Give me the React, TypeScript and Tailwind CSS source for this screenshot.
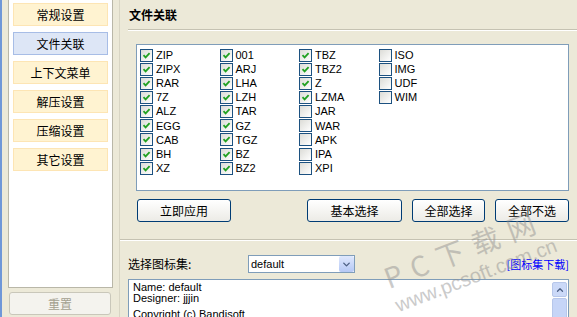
import { ChevronDown, ChevronUp } from 'lucide-react';

const cn = '"Noto Sans CJK SC", sans-serif';

const columns: { label: string; checked: boolean }[][] = [
  [
    { label: 'ZIP', checked: true },
    { label: 'ZIPX', checked: true },
    { label: 'RAR', checked: true },
    { label: '7Z', checked: true },
    { label: 'ALZ', checked: true },
    { label: 'EGG', checked: true },
    { label: 'CAB', checked: true },
    { label: 'BH', checked: true },
    { label: 'XZ', checked: true },
  ],
  [
    { label: '001', checked: true },
    { label: 'ARJ', checked: true },
    { label: 'LHA', checked: true },
    { label: 'LZH', checked: true },
    { label: 'TAR', checked: true },
    { label: 'GZ', checked: true },
    { label: 'TGZ', checked: true },
    { label: 'BZ', checked: true },
    { label: 'BZ2', checked: true },
  ],
  [
    { label: 'TBZ', checked: true },
    { label: 'TBZ2', checked: true },
    { label: 'Z', checked: true },
    { label: 'LZMA', checked: true },
    { label: 'JAR', checked: false },
    { label: 'WAR', checked: false },
    { label: 'APK', checked: false },
    { label: 'IPA', checked: false },
    { label: 'XPI', checked: false },
  ],
  [
    { label: 'ISO', checked: false },
    { label: 'IMG', checked: false },
    { label: 'UDF', checked: false },
    { label: 'WIM', checked: false },
  ],
];

const menu = ['常规设置', '文件关联', '上下文菜单', '解压设置', '压缩设置', '其它设置'];

function CheckBox({ checked }: { checked: boolean }) {
  return (
    <span className="flex h-[13px] w-[13px] shrink-0 items-center justify-center border border-[#1c5180] bg-gradient-to-br from-[#dcdcd7] to-white">
      {checked && (
        <svg width="9" height="9" viewBox="0 0 9 9">
          <path d="M1.5 4.2 L3.6 6.4 L7.6 2.2" fill="none" stroke="#21a121" strokeWidth="1.8" />
        </svg>
      )}
    </span>
  );
}

function XpButton({ children, w }: { children: string; w: string }) {
  return (
    <button
      className={`${w} h-[23px] shrink-0 rounded-[3px] border border-[#003c74] bg-gradient-to-b from-white to-[#ecebe6] text-[12px] text-black`}
      style={{ fontFamily: cn }}
    >
      {children}
    </button>
  );
}

export default function App() {
  return (
    <div
      className="relative flex h-[317px] w-[577px] overflow-hidden bg-[#ece9d8]"
      style={{ fontFamily: '"Liberation Sans", sans-serif' }}
    >
      {/* left nav */}
      <div className="flex w-[120px] shrink-0 flex-col border-l-2 border-r border-l-[#6f97d8] border-r-[#d8d5c4] pl-[6px]">
        <div className="-mt-px flex h-[289px] w-[105px] shrink-0 flex-col gap-[6px] border border-[#b9b7a8] bg-white pl-[4px] pt-[3px]">
          {menu.map((m, i) => (
            <div
              key={m}
              className={`flex h-[23px] w-[95px] shrink-0 items-center justify-center border text-[12px] text-black ${
                i === 1 ? 'border-[#a7bde6] bg-[#dde6f6]' : 'border-[#fde5b4] bg-[#fff3d1]'
              }`}
              style={{ fontFamily: cn }}
            >
              {m}
            </div>
          ))}
        </div>
        <div
          className="ml-[1px] mt-[4px] flex h-[23px] w-[102px] shrink-0 items-center justify-center rounded-[3px] border border-[#c9c7ba] bg-[#f4f3ee] text-[12px] text-[#a3a08f]"
          style={{ fontFamily: cn }}
        >
          重置
        </div>
      </div>

      {/* right pane */}
      <div className="flex flex-1 flex-col">
        <div className="flex h-[29px] shrink-0 items-center pl-[9px] text-[12px] font-bold text-black" style={{ fontFamily: cn }}>
          文件关联
        </div>
        <div className="ml-[8px] shrink-0 border-t border-b border-t-[#c5c2b2] border-b-white" />

        <div className="ml-[16px] mt-[13px] flex h-[147px] w-[433px] shrink-0 border border-[#7f9db9] bg-white pl-[3px] pt-[3px]">
          {columns.map((col, ci) => (
            <div key={ci} className="flex w-[79.5px] flex-col">
              {col.map((it) => (
                <div key={it.label} className="flex h-[14.15px] shrink-0 items-center gap-[3px] text-[11px] text-black">
                  <CheckBox checked={it.checked} />
                  <span>{it.label}</span>
                </div>
              ))}
            </div>
          ))}
        </div>

        <div className="ml-[17px] mt-[8px] flex w-[432px] shrink-0">
          <XpButton w="w-[94px]">立即应用</XpButton>
          <div className="ml-auto flex gap-[10px]">
            <XpButton w="w-[95px]">基本选择</XpButton>
            <XpButton w="w-[73px]">全部选择</XpButton>
            <XpButton w="w-[74px]">全部不选</XpButton>
          </div>
        </div>

        <div className="mt-[17px] shrink-0 border-t border-b border-t-[#c5c2b2] border-b-white" />

        <div className="ml-[8px] mt-[14px] flex h-[18px] w-[441px] shrink-0 items-center">
          <span className="w-[120px] text-[12px] text-black" style={{ fontFamily: cn }}>
            选择图标集:
          </span>
          <div className="flex h-[18px] w-[107px] items-center border border-[#7f9db9] bg-white pl-[2px]">
            <span className="flex-1 text-[11px] text-black">default</span>
            <span className="flex h-[16px] w-[15px] items-center justify-center rounded-[2px] bg-gradient-to-b from-[#dfe8fd] to-[#b5c8f5]">
              <ChevronDown size={11} strokeWidth={3} className="text-[#4d6185]" />
            </span>
          </div>
          <span className="ml-auto text-[11px] text-[#0000ff]" style={{ fontFamily: cn }}>
            [图标集下载]
          </span>
        </div>

        <div className="ml-[8px] mt-[6px] flex h-[60px] w-[441px] shrink-0 border border-[#7f9db9] bg-white">
          <div className="flex-1 pl-[4px] pt-[2px] text-[11px] leading-[11px] text-black">
            <div>Name: default</div>
            <div>Designer: jjjin</div>
            <div className="mt-[5px]">Copyright (c) Bandisoft</div>
          </div>
          <div className="flex w-[16px] flex-col gap-px pt-[2px] pr-[1px]">
            <span className="flex h-[15px] w-[15px] items-center justify-center rounded-[2px] border border-[#b7c7ea] bg-[#cbd9f8]">
              <ChevronUp size={10} strokeWidth={3} className="text-[#4d6185]" />
            </span>
            <span className="h-[40px] w-[15px] rounded-[2px] border border-[#b7c7ea] bg-[#c6d5f7]" />
          </div>
        </div>
      </div>

      {/* watermark */}
      <div
        className="pointer-events-none absolute left-[390px] top-[262px] origin-bottom-left -rotate-[21deg] whitespace-nowrap text-[28px] leading-[30px] tracking-[10px] text-[#8c8c8c] opacity-45"
        style={{ fontFamily: cn }}
      >
        PC下载网
      </div>
      <div
        className="pointer-events-none absolute left-[400px] top-[294px] origin-bottom-left -rotate-[21deg] whitespace-nowrap text-[20px] leading-[22px] text-[#8c8c8c] opacity-45"
        style={{ fontFamily: '"Liberation Sans", sans-serif' }}
      >
        www.pcsoft.com.cn
      </div>
    </div>
  );
}
